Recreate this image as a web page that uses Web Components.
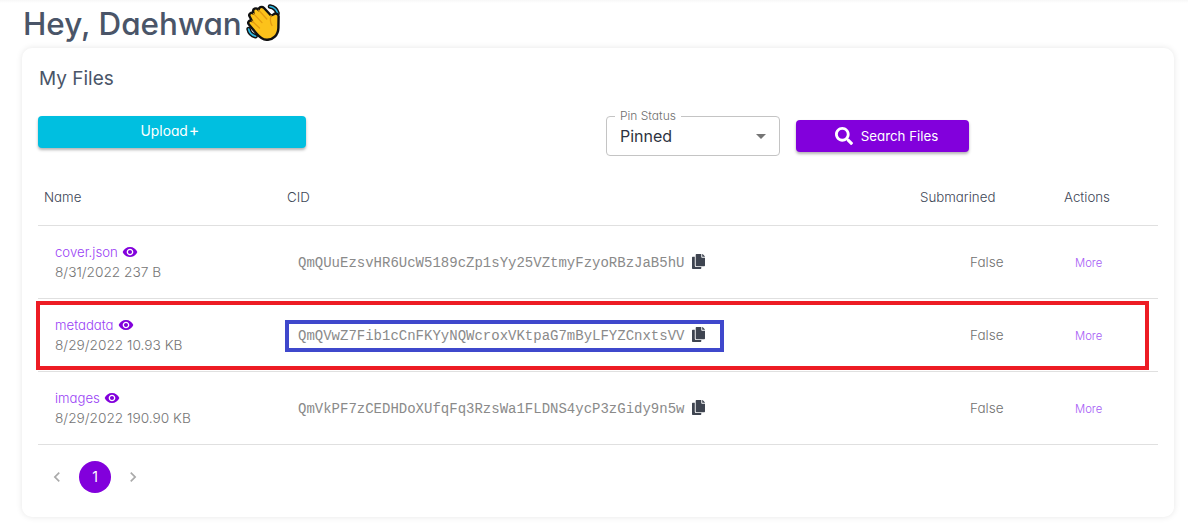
<!DOCTYPE html>
<html>
<head>
<meta charset="utf-8">
<title>My Files</title>
<style>
    html, body { margin: 0; background: #fff; }
    body {
        font-family: Inter, "Liberation Sans", sans-serif;
        font-feature-settings: "cv11";
        color: #4a5568;
    }
</style>
</head>
<body>
<files-page></files-page>

<script>
const EYE = 'M12 4.5C7 4.5 2.73 7.61 1 12c1.73 4.39 6 7.5 11 7.5s9.27-3.11 11-7.5c-1.73-4.39-6-7.5-11-7.5zM12 17c-2.76 0-5-2.24-5-5s2.24-5 5-5 5 2.24 5 5-2.24 5-5 5zm0-8c-1.66 0-3 1.34-3 3s1.34 3 3 3 3-1.34 3-3-1.34-3-3-3z'
const COPY = 'M320 448v40c0 13.255-10.745 24-24 24H24c-13.255 0-24-10.745-24-24V120c0-13.255 10.745-24 24-24h72v296c0 30.879 25.121 56 56 56h168zm0-344V0H152c-13.255 0-24 10.745-24 24v368c0 13.255 10.745 24 24 24h272c13.255 0 24-10.745 24-24V128H344c-13.2 0-24-10.8-24-24zm120.971-31.029L375.029 7.029A24 24 0 0 0 358.059 0H352v96h96v-6.059a24 24 0 0 0-7.029-16.97z'
const SEARCH = 'M505 442.7L405.3 343c-4.5-4.5-10.6-7-17-7H372c27.6-35.3 44-79.7 44-128C416 93.1 322.9 0 208 0S0 93.1 0 208s93.1 208 208 208c48.3 0 92.7-16.4 128-44v16.3c0 6.4 2.5 12.5 7 17l99.7 99.7c9.4 9.4 24.6 9.4 33.9 0l28.3-28.3c9.4-9.4 9.4-24.6.1-34zM208 336c-70.7 0-128-57.2-128-128 0-70.7 57.2-128 128-128 70.7 0 128 57.2 128 128 0 70.7-57.2 128-128 128z'

class WaveHand extends HTMLElement {
    constructor() {
        super()
        this.attachShadow({ mode: 'open' })
        this.shadowRoot.innerHTML = `
            <style>
                :host { display: block; width: 38px; height: 38px; }
                svg { display: block; }
            </style>
            <svg width="38" height="38" viewBox="0 0 38 38">
                <g fill="none" stroke="#111" stroke-width="4.6" stroke-linecap="round">
                    <path d="M25 3.5c3.8.6 6.6 3 7.6 6.8"/>
                    <path d="M3.6 26c.7 3.6 3.2 6.2 7 7.2"/>
                </g>
                <g fill="none" stroke="#2bb5e0" stroke-width="1.7" stroke-linecap="round">
                    <path d="M25 3.5c3.8.6 6.6 3 7.6 6.8"/>
                    <path d="M3.6 26c.7 3.6 3.2 6.2 7 7.2"/>
                </g>
                <path d="M28.5 11.5 C30.5 9.5 33.8 11 33.6 13.6 L33.4 25 C33.2 32 28 37.2 21.5 36.8 C17 36.5 14 33.5 11.5 30.5 L3.9 21.5 C2 19.3 4.6 16.5 7 18 L4.6 13.5 C3.2 11 6.3 8.6 8.5 10.6 L8.2 8.6 C7.6 5.8 11 4.3 13 6.4 L13.8 7.2 C13.3 4.4 16.8 2.8 18.8 4.8 L26 12.5 Z"
                    fill="#fcc21b" stroke="#111" stroke-width="2.4" stroke-linejoin="round"/>
                <g fill="none" stroke="#e49b10" stroke-width="1.3" stroke-linecap="round">
                    <path d="M7 18l7.5 7"/>
                    <path d="M8.5 10.6l8.5 9"/>
                    <path d="M13.8 7.2l8 8.8"/>
                    <path d="M26 12.5c-1 4 -1 7 1 10"/>
                </g>
            </svg>
        `
    }
}

class PinSelect extends HTMLElement {
    constructor() {
        super()
        this.attachShadow({ mode: 'open' })
        this.shadowRoot.innerHTML = `
            <style>
                :host {
                    display: flex;
                    align-items: center;
                    box-sizing: border-box;
                    width: 174px;
                    height: 40px;
                    padding: 0 14px 0 13px;
                    position: relative;
                    border: 1px solid #c4c4c4;
                    border-radius: 4px;
                    font-size: 16px;
                    color: #2d3340;
                }
                .label {
                    position: absolute;
                    top: -7px;
                    left: 8px;
                    padding: 0 5px;
                    background: #fff;
                    font-size: 12px;
                    line-height: 12px;
                    font-weight: 300;
                    color: #6f6f6f;
                }
                .value { flex: 1; }
                .arrow {
                    width: 0;
                    height: 0;
                    margin-right: -1px;
                    border-left: 5px solid transparent;
                    border-right: 5px solid transparent;
                    border-top: 5px solid #757575;
                }
            </style>
            <span class="label">Pin Status</span>
            <span class="value"><slot></slot></span>
            <span class="arrow"></span>
        `
    }
}

class FileRow extends HTMLElement {
    constructor() {
        super()
        this.attachShadow({ mode: 'open' })
    }

    connectedCallback() {
        const hasBoxes = this.hasAttribute('marked')
        this.shadowRoot.innerHTML = `
            <style>
                :host {
                    display: grid;
                    grid-template-columns: 243px 633px 144px 1fr;
                    align-items: center;
                    box-sizing: border-box;
                    height: 73px;
                    position: relative;
                    border-bottom: 1px solid #e0e0e0;
                }
                .name { padding: 0 0 2px 17px; }
                .title {
                    display: flex;
                    align-items: center;
                    gap: 4px;
                    height: 18px;
                    font-size: 13.2px;
                    font-weight: 300;
                    color: #9a3ff5;
                }
                .title svg { fill: #8200dc; display: block; }
                .meta { margin-top: 3px; font-size: 13.7px; font-weight: 300; color: #757575; }
                .cid {
                    display: flex;
                    align-items: center;
                    gap: 8px;
                    padding: 1px 0 0 17px;
                    font: 14px "Liberation Mono", monospace;
                    color: #8a8a8a;
                }
                .cid svg { fill: #3e4450; display: block; margin-top: -2px; }
                .state { padding-left: 56px; font-size: 13.5px; font-weight: 300; color: #6f6f6f; }
                .more { padding: 1px 0 0 17px; font-size: 11.3px; font-weight: 300; color: #a65cf6; }
                .red {
                    position: absolute;
                    left: -2px;
                    top: 2px;
                    width: 1113px;
                    height: 69px;
                    box-sizing: border-box;
                    border: 4px solid #ed1c24;
                }
                .blue {
                    position: absolute;
                    left: 247px;
                    top: 21px;
                    width: 439px;
                    height: 32px;
                    box-sizing: border-box;
                    border: 4px solid #3f48cc;
                }
            </style>
            <div class="name">
                <div class="title">
                    <span>${this.getAttribute('name')}</span>
                    <svg width="16" height="16" viewBox="0 0 24 24"><path d="${EYE}"/></svg>
                </div>
                <div class="meta">${this.getAttribute('meta')}</div>
            </div>
            <div class="cid">
                <span>${this.getAttribute('cid')}</span>
                <svg width="13" height="15" viewBox="0 0 448 512"><path d="${COPY}"/></svg>
            </div>
            <div class="state">False</div>
            <div class="more">More</div>
            ${hasBoxes ? '<div class="red"></div><div class="blue"></div>' : ''}
        `
    }
}

class FilePager extends HTMLElement {
    constructor() {
        super()
        this.attachShadow({ mode: 'open' })
        this.shadowRoot.innerHTML = `
            <style>
                :host {
                    display: flex;
                    align-items: center;
                    gap: 12px;
                    padding: 16px 0 0 9px;
                }
                svg { display: block; fill: #aaa; }
                .page {
                    width: 32px;
                    height: 32px;
                    border-radius: 50%;
                    background: #8200dc;
                    color: #fff;
                    font-size: 14px;
                    line-height: 32px;
                    text-align: center;
                }
            </style>
            <svg width="20" height="20" viewBox="0 0 24 24"><path d="M15.41 7.41L14 6l-6 6 6 6 1.41-1.41L10.83 12z"/></svg>
            <div class="page">1</div>
            <svg width="20" height="20" viewBox="0 0 24 24"><path d="M10 6L8.59 7.41 13.17 12l-4.58 4.59L10 18l6-6z"/></svg>
        `
    }
}

class FilesCard extends HTMLElement {
    constructor() {
        super()
        this.attachShadow({ mode: 'open' })
        this.shadowRoot.innerHTML = `
            <style>
                :host {
                    display: block;
                    box-sizing: border-box;
                    height: 469px;
                    padding: 19px 16px 0 16px;
                    background: #fff;
                    border-radius: 10px;
                    box-shadow: 0 0 6px rgba(0, 0, 0, 0.1);
                }
                h2 {
                    margin: 0 0 0 1px;
                    font-size: 19px;
                    line-height: 24px;
                    font-weight: 400;
                    color: #4a5568;
                }
                .controls {
                    display: flex;
                    align-items: flex-start;
                    margin-top: 25px;
                    height: 40px;
                }
                button {
                    display: flex;
                    align-items: center;
                    justify-content: center;
                    box-sizing: border-box;
                    height: 32px;
                    padding: 0;
                    border: 0;
                    border-radius: 4px;
                    color: #fff;
                    font: inherit;
                    font-size: 13.3px;
                    box-shadow: 0 2px 3px rgba(0, 0, 0, 0.3);
                }
                .upload {
                    width: 268px;
                    padding: 0 4px 2px 0;
                    margin-right: 300px;
                    background: #00bfe0;
                    gap: 1px;
                    font-size: 13.8px;
                }
                .upload span { font-size: 16px; line-height: 16px; margin-top: -2px; }
                .search { width: 173px; margin: 4px 0 0 16px; padding-left: 8px; background: #8200dc; gap: 8px; }
                .search svg { fill: #fff; display: block; }
                .head {
                    display: grid;
                    grid-template-columns: 243px 633px 144px 1fr;
                    align-items: center;
                    box-sizing: border-box;
                    height: 70px;
                    padding-top: 13px;
                    font-size: 13.3px;
                    font-weight: 300;
                    color: #3d4656;
                    border-bottom: 1px solid #e0e0e0;
                }
                .head span { padding-left: 6px; }
            </style>
            <h2>My Files</h2>
            <div class="controls">
                <button class="upload">Upload<span>+</span></button>
                <pin-select>Pinned</pin-select>
                <button class="search">
                    <svg width="18" height="18" viewBox="0 0 512 512"><path d="${SEARCH}"/></svg>
                    Search Files
                </button>
            </div>
            <div class="head">
                <span>Name</span><span>CID</span><span>Submarined</span><span>Actions</span>
            </div>
            <slot></slot>
        `
    }
}

class FilesPage extends HTMLElement {
    constructor() {
        super()
        this.attachShadow({ mode: 'open' })
        this.shadowRoot.innerHTML = `
            <style>
                :host {
                    display: block;
                    box-sizing: border-box;
                    height: 531px;
                    padding: 0 14px 0 22px;
                    overflow: hidden;
                    background: linear-gradient(#f7f7f7, #fff 3px);
                }
                .hello {
                    display: flex;
                    align-items: center;
                    height: 48px;
                    padding-left: 1px;
                }
                h1 {
                    margin: 0;
                    font-size: 31.4px;
                    font-weight: 500;
                    color: #4a5568;
                }
                wave-hand { margin: -4px 0 0 3px; }
            </style>
            <div class="hello">
                <h1>Hey, Daehwan</h1>
                <wave-hand></wave-hand>
            </div>
            <files-card>
                <file-row name="cover.json" meta="8/31/2022 237 B" cid="QmQUuEzsvHR6UcW5189cZp1sYy25VZtmyFzyoRBzJaB5hU"></file-row>
                <file-row marked name="metadata" meta="8/29/2022 10.93 KB" cid="QmQVwZ7Fib1cCnFKYyNQWcroxVKtpaG7mByLFYZCnxtsVV"></file-row>
                <file-row name="images" meta="8/29/2022 190.90 KB" cid="QmVkPF7zCEDHDoXUfqFq3RzsWa1FLDNS4ycP3zGidy9n5w"></file-row>
                <file-pager></file-pager>
            </files-card>
        `
    }
}

customElements.define('wave-hand', WaveHand)
customElements.define('pin-select', PinSelect)
customElements.define('file-row', FileRow)
customElements.define('file-pager', FilePager)
customElements.define('files-card', FilesCard)
customElements.define('files-page', FilesPage)
</script>
</body>
</html>
